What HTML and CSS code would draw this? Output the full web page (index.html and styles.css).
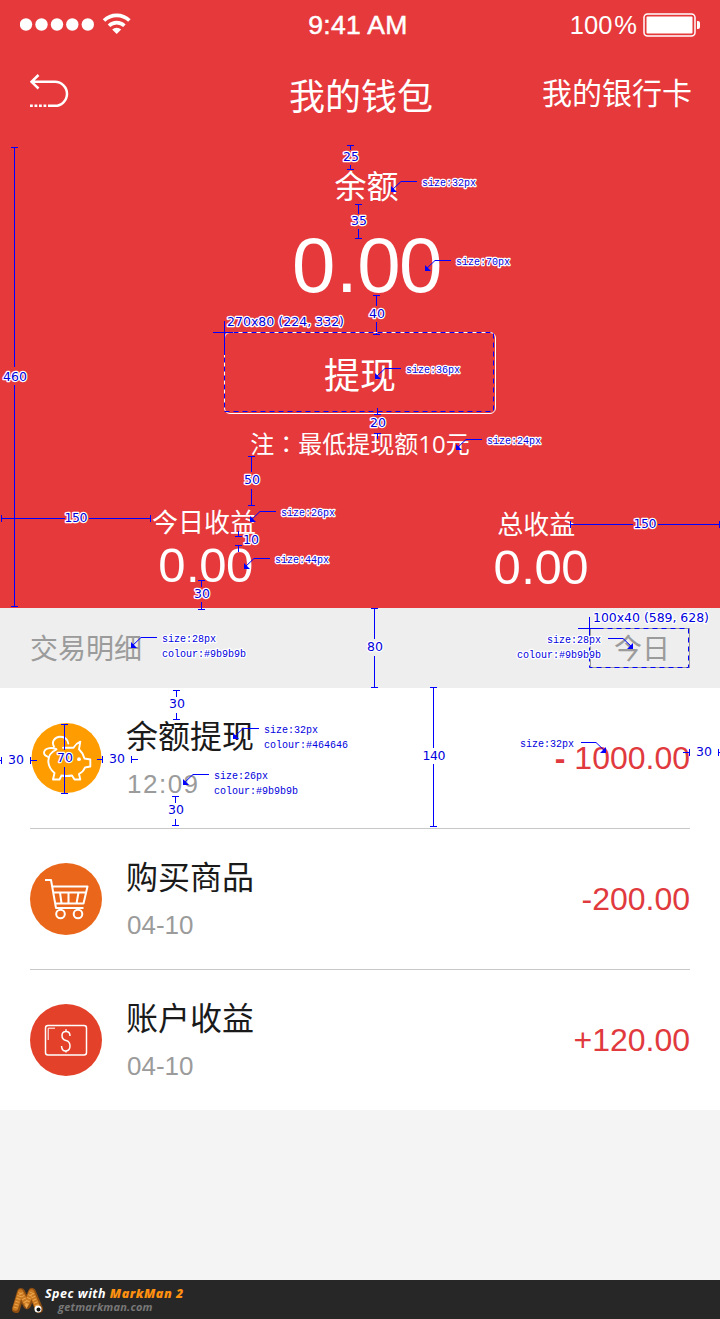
FILE: index.html
```html
<!DOCTYPE html>
<html lang="zh-CN">
<head>
<meta charset="utf-8">
<title>我的钱包</title>
<link rel="stylesheet" href="styles.css">
</head>
<body>
<div class="page">
  <section class="wallet">
    <div class="status">
      <svg class="signal" width="114" height="24" viewBox="0 0 114 24" fill="#fff">
        <circle cx="6" cy="12.5" r="6.2"/><circle cx="21.5" cy="12.5" r="6.2"/><circle cx="37" cy="12.5" r="6.2"/><circle cx="52.3" cy="12.5" r="6.2"/><circle cx="67.8" cy="12.5" r="6.2"/>
        <g fill="none" stroke="#fff" stroke-width="3.6"><path d="M84 8.5a18.2 18.2 0 0 1 25.4 0"/><path d="M89 13.7a11.3 11.3 0 0 1 15.400 0"/></g>
        <path d="M92.200 17.500a6.500 6.500 0 0 1 9 0L96.700 22Z"/>
      </svg>
      <span class="clock">9:41 AM</span>
      <div class="power">
        <span>100<span class="pct">%</span></span>
        <svg width="58" height="24" viewBox="0 0 58 24"><rect x="2" y="1" width="51" height="22" rx="3.500" fill="none" stroke="#fff" stroke-width="1.500"/><rect x="4.500" y="3.500" width="46" height="17" rx="1" fill="#fff"/><path d="M55 8h1q2 0 2 2v4q0 2-2 2h-1z" fill="#fff"/></svg>
      </div>
    </div>
    <header class="nav">
      <svg class="back" width="40" height="34" viewBox="0 0 40 34" fill="none" stroke="#fff" stroke-width="2.500">
        <path d="M8.500 1 1.500 7.800l7 6.700M1.500 7.800h23.500a12 12 0 0 1 0 24H18"/><path d="M0 31.800h17" stroke-dasharray="2.800 1.700"/>
      </svg>
      <h1 class="title">我的钱包</h1>
      <a class="cards">我的银行卡</a>
    </header>
    <div class="balance-label">余额</div>
    <div class="balance">0<span class="point">.</span>00</div>
    <button class="withdraw">提现</button>
    <p class="note">注<span class="colon" lang="zh-TW">：</span>最低提现额<span class="digits">10</span>元</p>
    <div class="earnings">
      <div class="earning today"><span class="earning-label">今日收益</span><span class="earning-value">0<span class="point">.</span>00</span></div>
      <div class="earning total"><span class="earning-label">总收益</span><span class="earning-value">0<span class="point">.</span>00</span></div>
    </div>
  </section>
  <div class="filter"><span>交易明细</span><span class="filter-day">今日</span></div>
  <ul class="list">
    <li class="row">
      <svg class="icon" width="72" height="72" viewBox="0 0 72 72">
        <circle cx="36.500" cy="36" r="35" fill="#ff9c00"/>
        <g fill="none" stroke="#fff" stroke-width="1.900" stroke-linejoin="round" stroke-linecap="round">
          <path d="M33 25.700h10.500Q46 21.500 50.300 19.700L49 27.300Q53 31 54.500 36.500L60.300 37.500V44.500L55 45.500Q53.500 49.500 49 52L50.300 57.500H44.500L42 53.500Q36.500 54.500 31.500 53.500L29.500 57.500H23L24.500 51Q18.500 46 18.300 39Q18.500 31 26.500 27.500"/>
          <path d="M24 24.500C21 19.500 25 15 30 14.800S38 18 38.300 21.500M26 27C21 25 14.500 26 14 30.500Q14 33.500 18 34.800"/>
        </g>
        <circle cx="49" cy="37.200" r="1.900" fill="#fff"/>
      </svg>
      <div class="desc"><span class="name">余额提现</span><span class="when spaced">12:09</span></div>
      <span class="amount"><span class="minus">-</span> 1000.00</span>
    </li>
    <li class="row">
      <svg class="icon" width="72" height="72" viewBox="0 0 72 72">
        <circle cx="36" cy="36" r="36" fill="#ea661a"/>
        <g fill="none" stroke="#fff" stroke-width="2" stroke-linejoin="round">
          <path d="M15 17H21L26 45H53.500M22.500 23.500H57.500L53.500 40.500H25.500M23.500 29.500H56M30 29.500L31.500 40.500M38.500 29.500V40.500M48.500 29.500L46.500 40.500"/>
          <circle cx="30.500" cy="51" r="4.300"/><circle cx="48" cy="51" r="4.300"/>
        </g>
      </svg>
      <div class="desc"><span class="name">购买商品</span><span class="when">04-10</span></div>
      <span class="amount">-200.00</span>
    </li>
    <li class="row">
      <svg class="icon" width="72" height="72" viewBox="0 0 72 72">
        <circle cx="36" cy="36" r="36" fill="#e34129"/>
        <g fill="none" stroke="#fff" stroke-width="1.500">
          <rect x="15.500" y="21.500" width="41" height="29.500" rx="2.500"/>
          <path d="M18.200 36V24.200H25" stroke-width="1"/>
          <path d="M40 32q0-4.500-4-4.500t-4 4 4 5 4 5.500-4 5-4.500-5M36 25.200v2.300M36 46.500v2" stroke-width="1.500"/>
        </g>
      </svg>
      <div class="desc"><span class="name">账户收益</span><span class="when">04-10</span></div>
      <span class="amount">+120.00</span>
    </li>
  </ul>
  <footer class="credit">
    <svg width="32" height="30" viewBox="0 0 32 30" fill="none" stroke-linecap="round">
      <path d="M5 24 10 7 16 20 21 7 28 24" stroke="#8c4d13" stroke-width="8" stroke-linejoin="round"/>
      <path d="M4.500 23 9.500 7 15.500 19 20.500 7 26.500 22" stroke="#c9781f" stroke-width="5.500" stroke-linejoin="round"/>
      <path d="M4.500 23 9.500 7 15.500 19 20.500 7 26.500 22" stroke="#eba650" stroke-width="4" stroke-dasharray="1 2" stroke-linecap="butt"/>
      <circle cx="27" cy="24" r="3.500" fill="#fff"/><circle cx="27.500" cy="24.500" r="2" fill="#111"/>
    </svg>
    <div class="credit-text"><span class="spec">Spec with <b>MarkMan 2</b></span><span class="site">getmarkman.com</span></div>
  </footer>

  <svg class="marks" width="720" height="1319" viewBox="0 0 720 1319">
    <defs>
      <g id="left"><path class="lead" d="M26 .500H10L0 10"/><path class="tip" d="M0 5v6h6z"/></g>
      <g id="right"><path class="lead" d="M0 .500h15L25 10"/><path class="tip" d="M25 5v6h-6z"/></g>
    </defs>
    <g class="line">
      <path d="M11 147.500h7M14.500 147v220M14.500 385v222M11 606.500h7"/>
      <path d="M347 145.500h7M350.500 145v5M350.500 165v5M347 169.500h7"/>
      <path d="M355 204.500h7M358.500 204v10M358.500 229v9M355 238.500h7"/>
      <path d="M373 295.500h7M376.500 295v11M376.500 322v12M373 334.500h7"/>
      <path d="M377.500 408v6M374 414.500h7M374 433.500h7M377.500 433v6"/>
      <path d="M248 456.500h7M251.500 456v16M251.500 489v16M248 505.500h7"/>
      <path d="M238.500 531v5M235 536.500h7M235 545.500h7M238.500 545v7"/>
      <path d="M198 580.500h7M201.500 580v7M201.500 602v7M198 609.500h7"/>
      <path d="M371 608.500h7M374.500 608v31M374.500 656v31M371 687.500h7"/>
      <path d="M173 690.500h7M176.500 690v7M176.500 713v6M173 719.500h7"/>
      <path d="M172 796.500h7M175.500 796v7M175.500 819v6M172 825.500h7"/>
      <path d="M430 687.500h7M433.500 687v61M433.500 764v62M430 826.500h7"/>
      <path d="M61 724.500h7M64.500 724v26M64.500 767v26M61 793.500h7"/>
      <path d="M1.500 515v7M1 518.500h64M89 518.500h61M150.500 515v7"/>
      <path d="M570.500 521v7M570 524.500h63M658 524.500h62M719.500 521v7"/>
      <path d="M1.500 757v7M0 760.500h2M30.500 757v7M30 760.500h7"/>
      <path d="M97 759.500h5M102.500 756v7M131.500 756v7M131 759.500h7"/>
      <path d="M683 752.500h6M689.500 749v7M718.500 749v7M718 752.500h2"/>
      <path d="M224.500 321v34M213 332.500h20M589.500 617v22M578 628.500h24"/>
    </g>
    <path class="frame-base" d="M224.500 355v52M233 332.500h257"/>
    <g class="frame"><path d="M224.500 332.500h269v79h-269z"/><path d="M589.500 628.500h99v39h-99z"/></g>
    <g class="callout">
      <use href="#left" x="391" y="181"/><use href="#left" x="425" y="260"/><use href="#left" x="375" y="368"/>
      <use href="#left" x="456" y="439"/><use href="#left" x="250" y="511"/><use href="#left" x="244" y="558"/>
      <use href="#left" x="131" y="637"/><use href="#left" x="233" y="728"/><use href="#left" x="183" y="774"/>
      <use href="#right" x="608" y="638"/><use href="#right" x="581" y="742"/>
    </g>
    <g class="dim">
      <text x="15" y="380.500" textLength="24">460</text><text x="351" y="160.500">25</text><text x="359" y="225">35</text>
      <text x="377" y="318">40</text><text x="378" y="427">20</text><text x="252" y="484">50</text>
      <text x="251" y="544">10</text><text x="202" y="598">30</text><text x="375" y="651">80</text>
      <text x="177" y="708">30</text><text x="176" y="814">30</text><text x="434" y="760" textLength="23">140</text>
      <text x="65" y="762">70</text><text x="76" y="522" textLength="23">150</text><text x="645" y="528" textLength="23">150</text>
      <text x="16" y="764">30</text><text x="117" y="763">30</text><text x="704" y="756">30</text>
      <text x="285.500" y="326" textLength="117">270x80 (224, 332)</text><text x="651" y="622" textLength="116">100x40 (589, 628)</text>
    </g>
    <g class="spec-label">
      <text x="422" y="186">size:32px</text><text x="456" y="265">size:70px</text><text x="406" y="373">size:36px</text>
      <text x="487" y="444">size:24px</text><text x="281" y="516">size:26px</text><text x="275" y="563">size:44px</text>
      <text x="162" y="642">size:28px</text><text x="162" y="657">colour:#9b9b9b</text>
      <text x="547" y="643">size:28px</text><text x="517" y="658">colour:#9b9b9b</text>
      <text x="264" y="733">size:32px</text><text x="264" y="748">colour:#464646</text>
      <text x="214" y="779">size:26px</text><text x="214" y="794">colour:#9b9b9b</text>
      <text x="520" y="747">size:32px</text>
    </g>
  </svg>
</div>
</body>
</html>
```
FILE: styles.css
```css
* { box-sizing: border-box; }
body { margin: 0; background: #f4f4f4; font-family: "Noto Sans CJK SC", sans-serif; }
.page { position: relative; width: 720px; height: 1319px; display: flex; flex-direction: column; overflow: hidden; }

.wallet { height: 608px; background: #e5393c; color: #fff; display: flex; flex-direction: column; align-items: center; }
.status { width: 100%; height: 48px; padding: 0 20px; display: grid; grid-template-columns: 1fr auto 1fr; align-items: center; font: 26.500px/50px "Liberation Sans", sans-serif; }
.signal { margin-top: -3px; }
.clock { -webkit-text-stroke: .500px #fff; padding-right: 4px; letter-spacing: .300px; }
.power { display: flex; align-items: center; justify-content: flex-end; gap: 5px; font-size: 25.500px; }
.pct { margin-left: 2px; }
.nav { width: 100%; height: 94px; padding: 0 28px 0 30px; display: grid; grid-template-columns: 1fr auto 1fr; align-items: center; }
.back { margin-top: -8px; }
.title { margin: -2px 0 0; font-size: 36px; font-weight: 400; line-height: 92px; }
.cards { justify-self: end; font-size: 30px; line-height: 40px; margin-top: -8px; }
.balance-label { margin: 22px 0 0 13px; font-size: 32px; line-height: 40px; }
.balance { margin: 18px 0 0 13px; height: 87px; font: 78px/86px "Liberation Sans", sans-serif; letter-spacing: -1.500px; }
.point { margin: 0 1px 0 2px; }
.withdraw { width: 272px; height: 82px; margin-top: 23px; padding: 0; border: 1px solid #fff; border-radius: 6px; background: none; color: #fff; font: 400 36px/76px "Noto Sans CJK SC", sans-serif; }
.note { margin: 11px 0 0; font-size: 24px; line-height: 36px; height: 36px; }
.colon { font-family: "Noto Sans CJK TC", sans-serif; }
.digits { font-family: "Open Sans", sans-serif; }
.earnings { width: 100%; margin-top: 43px; padding: 0 134px 0 152px; display: flex; justify-content: space-between; }
.earning { display: flex; flex-direction: column; align-items: center; }
.earning-label { font-size: 26px; line-height: 34px; }
.earning-value { margin: -1px 0 0 3px; font: 49px/56px "Liberation Sans", sans-serif; letter-spacing: -.500px; }
.earning-value .point { margin: 0 0 0 1px; }
.total { margin-top: 2px; }
.total .earning-label { margin-left: -6px; }
.total { margin-right: -2px; }

.filter { height: 80px; padding: 0 30px 2px; display: flex; align-items: center; justify-content: space-between; background: #eee; color: #9b9b9b; font-size: 28px; }
.filter-day { width: 100px; height: 40px; margin-top: 2px; border: 1px solid #9b9b9b; padding-left: 4px; text-align: center; line-height: 36px; }

.list { margin: 0; padding: 0 30px; height: 422px; background: #fff; list-style: none; }
.row { height: 141px; display: flex; align-items: center; border-bottom: 1px solid #c8c8c8; }
.row:last-child { height: 140px; border: 0; }
.icon { flex: none; }
.desc { flex: 1; margin-left: 24px; display: flex; flex-direction: column; }
.name { font-size: 32px; line-height: 48px; color: #1a1a1a; }
.when { margin: 2px 0 -2px 1px; font: 26px/48px "Liberation Sans", sans-serif; color: #9b9b9b; }
.spaced { letter-spacing: 1.500px; }
.amount { font: 32px/40px "Liberation Sans", sans-serif; color: #e13a3e; }
.minus { font-weight: 700; }

.credit { margin-top: auto; height: 39px; padding-left: 11px; background: #272727; display: flex; align-items: center; gap: 2px; font-family: "Open Sans", sans-serif; font-style: italic; font-weight: 700; }
.credit-text { display: flex; flex-direction: column; }
.spec { color: #fff; font-size: 12.500px; line-height: 14px; letter-spacing: .500px; }
.spec b { color: #ff9010; }
.site { margin-left: 13px; color: #777; font-size: 11px; line-height: 12px; letter-spacing: .200px; }

.marks { position: absolute; left: 0; top: 0; pointer-events: none; }
.line, .lead { fill: none; stroke: #00f; stroke-width: 1; }
.tip { fill: #00f; }
.frame-base { fill: none; stroke: #fff; }
.frame { fill: none; stroke: #00f; stroke-dasharray: 5 4; }
.dim text, .spec-label text { fill: #00d; stroke: #fff; stroke-width: 2.500px; paint-order: stroke; stroke-linejoin: round; }
.dim { font: 12.500px "DejaVu Sans", sans-serif; text-anchor: middle; }
.spec-label { font: 10px "Liberation Mono", monospace; }
```
